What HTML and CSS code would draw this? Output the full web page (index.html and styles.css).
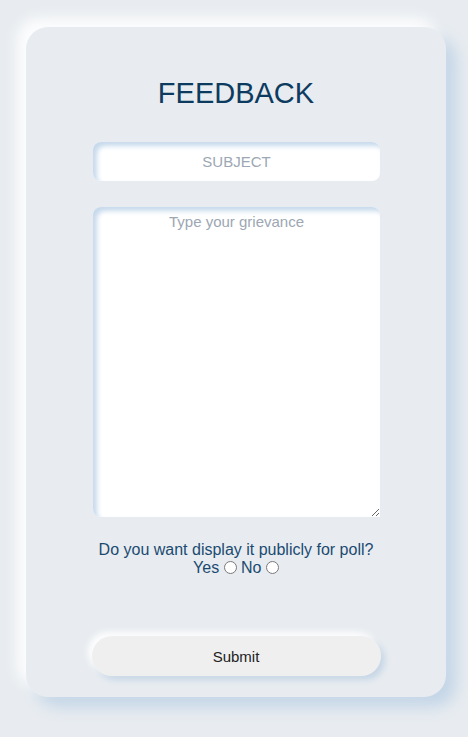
FILE: index.html
```html
<!DOCTYPE html>
<html lang="en">

<head>
  <meta charset="UTF-8">
  <meta name="viewport" content="width=device-width, initial-scale=1.0">
  <title>Feedback</title>
  <link rel="stylesheet" href="styles.css">
</head>

<body>
  <div class="card">
    <h1 class="title">FEEDBACK</h1>
    <form class="feedback-form">
      <input type="text" class="subject" placeholder="SUBJECT">
      <textarea class="grievance" placeholder="Type your grievance"></textarea>
      <div class="poll">
        Do you want display it publicly for poll?<br>
        Yes <input type="radio" name="poll" value="yes"> No <input type="radio" name="poll" value="no">
      </div>
      <button type="submit" class="submit">Submit</button>
    </form>
  </div>
</body>

</html>
```

FILE: styles.css
```css
/* neumorphism feedback card */

html {
  background-color: #e8ecf0;
}

body {
  margin: 0;
  padding: 27px 0 40px 26px;
  min-height: 100vh;
  box-sizing: border-box;
  background-color: #e8ecf0;
  font-family: "Liberation Sans", Arial, sans-serif;
}

.card {
  box-sizing: border-box;
  width: 420px;
  height: 670px;
  padding-top: 50px;
  border-radius: 22px;
  background-color: #e8ecf0;
  box-shadow: -9px -9px 14px rgba(255, 255, 255, 0.9), 10px 10px 16px #c3d5e7;
}

.title {
  margin: 0;
  text-align: center;
  font-weight: normal;
  font-size: 29px;
  color: #0d3b60;
}

.feedback-form {
  display: flex;
  flex-direction: column;
  align-items: center;
  margin-top: 32px;
}

.subject,
.grievance {
  box-sizing: border-box;
  width: 287px;
  border: none;
  outline: none;
  border-radius: 8px;
  background-color: #fff;
  font-family: "Liberation Sans", Arial, sans-serif;
  font-size: 15px;
  text-align: center;
  color: #333;
  box-shadow: inset 4px 4px 5px #c6d9ec;
}

.subject {
  height: 39px;
  margin-left: 1px;
}

.grievance {
  display: block;
  height: 310px;
  margin-top: 26px;
  margin-left: 1px;
  padding: 6px 4px 4px;
  resize: both;
  border-bottom-right-radius: 0;
}

.subject::placeholder,
.grievance::placeholder {
  color: #9ca7b3;
}

.poll {
  margin-top: 24px;
  text-align: center;
  font-size: 16px;
  color: #1b4a70;
}

.poll input[type="radio"] {
  margin: 0;
  width: 13px;
  height: 13px;
  vertical-align: -1px;
}

.submit {
  width: 289px;
  height: 40px;
  margin-top: 59px;
  border: none;
  border-radius: 20px;
  background-color: #efefef;
  font-family: "Liberation Sans", Arial, sans-serif;
  font-size: 15px;
  color: #222;
  cursor: pointer;
  box-shadow: -4px -4px 6px rgba(255, 255, 255, 0.9), 4px 4px 6px #c6d6e6;
}
```
